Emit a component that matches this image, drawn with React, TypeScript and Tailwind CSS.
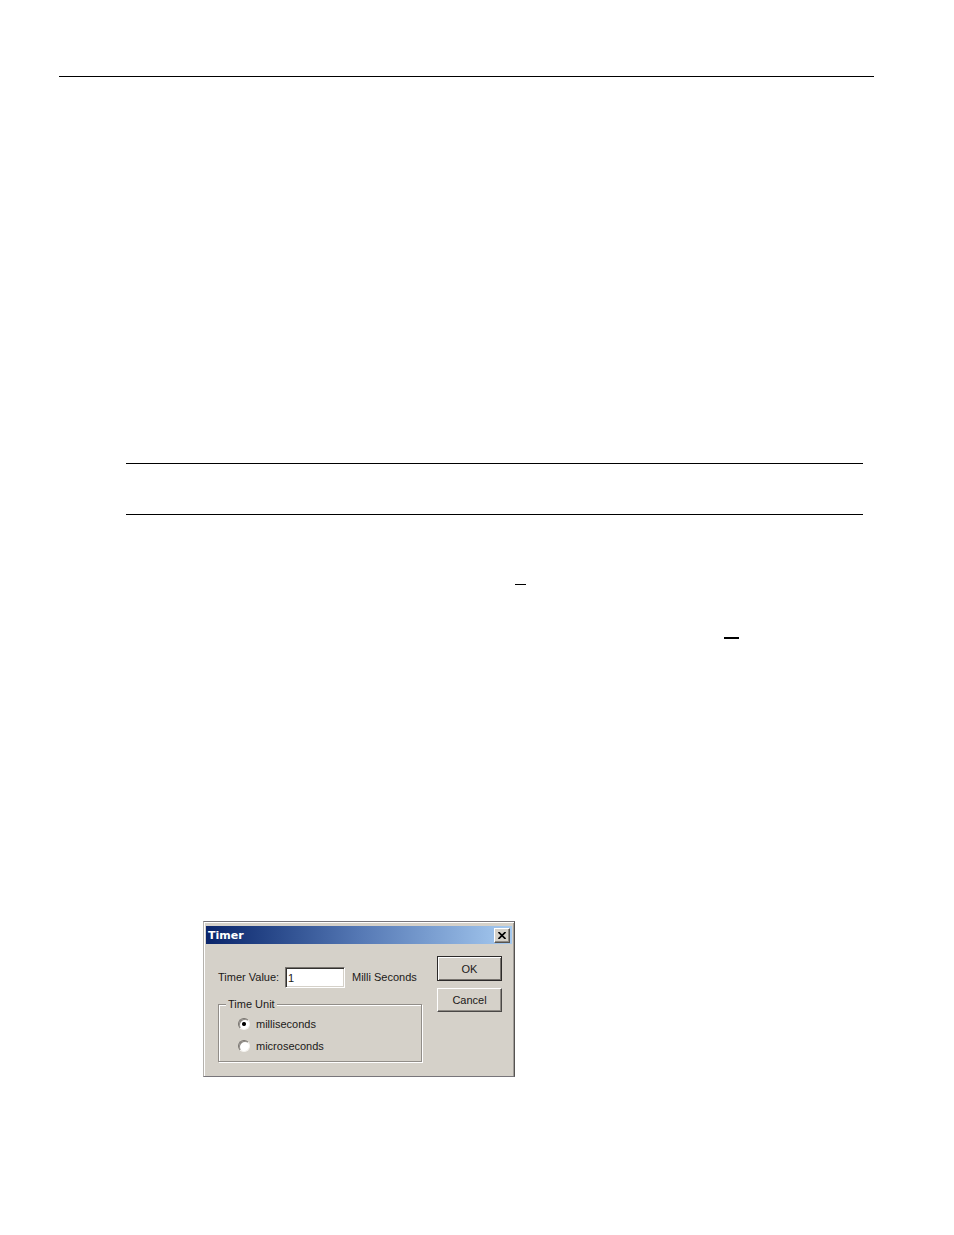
import { useState } from 'react'
import { clsx } from 'clsx'

type Unit = 'milliseconds' | 'microseconds'

const UNITS: { id: Unit; prefix: string }[] = [
  { id: 'milliseconds', prefix: 'Milli' },
  { id: 'microseconds', prefix: 'Micro' },
]

function DialogButton({ label, primary }: { label: string; primary?: boolean }) {
  return (
    <button
      type="button"
      className={clsx(
        'w-full border bg-[#d5d1c9] leading-3',
        primary
          ? 'h-[25px] border-[#2c2a29] shadow-[inset_1px_1px_0_#fff,inset_-1px_-1px_0_#77736e]'
          : 'h-6 border-t-white border-l-white border-r-[#4a4846] border-b-[#4a4846] shadow-[inset_-1px_-1px_0_#8e8a84]',
      )}>
      {label}
    </button>
  )
}

function UnitRadio({ unit, checked, onSelect }: {
  unit: Unit; checked: boolean; onSelect: (unit: Unit) => void
}) {
  return (
    <label className="flex h-[22px] items-center gap-1.5">
      <input
        type="radio"
        name="unit"
        checked={checked}
        onChange={() => onSelect(unit)}
        className={clsx(
          'size-3 appearance-none rounded-full border border-t-[#77736e] border-l-[#77736e] border-r-[#f4f2ee] border-b-[#f4f2ee]',
          'shadow-[inset_1px_1px_0_#8e8a84]',
          checked ? 'bg-[radial-gradient(circle,#000_0_1.5px,#fff_2.5px)]' : 'bg-white',
        )}
      />
      {unit}
    </label>
  )
}

function TimerDialog() {
  const [value, setValue] = useState('1')
  const [unit, setUnit] = useState<Unit>('milliseconds')
  const prefix = UNITS.find(u => u.id === unit)?.prefix

  return (
    <section
      aria-label="Timer"
      className="w-[312px] border border-t-[#77757a] border-l-[#b5b2ad] border-r-[#555351] border-b-[#77757a] bg-[#d5d1c9] px-0.5 pt-1 pb-3.5 font-['Liberation_Sans',Arial,sans-serif] text-[11px] leading-3 text-[#1b1918] shadow-[inset_1px_1px_0_#fff,inset_-1px_0_0_#a19d98]">
      {/* Title bar */}
      <header className="flex h-[18px] items-center justify-between bg-linear-to-r from-[#0a246a] via-[#5578b4] to-[#a6caf0] px-0.5">
        <h1 className="pt-0.5 font-['DejaVu_Sans',Verdana,sans-serif] font-bold text-white">Timer</h1>
        <button
          type="button"
          aria-label="Close"
          className="flex h-[15px] w-4 items-center justify-center border border-t-white border-l-white border-r-[#55534f] border-b-[#55534f] bg-[#d5d1c9] shadow-[inset_-1px_-1px_0_#8e8a84]">
          <svg viewBox="0 0 8 7" className="h-[7px] w-2" stroke="#000" strokeWidth="1.6">
            <path d="M.5 0 7.5 7M7.5 0 .5 7" />
          </svg>
        </button>
      </header>

      <form className="flex justify-between pt-3 pr-2.5 pl-3" onSubmit={e => e.preventDefault()}>
        <div className="w-[204px] pt-[11px]">
          <div className="flex items-center">
            <label htmlFor="timer-value" className="w-[67px] pb-0.5 whitespace-nowrap">Timer Value:</label>
            <input
              id="timer-value"
              value={value}
              onChange={e => setValue(e.target.value)}
              className="h-[21px] w-[60px] border border-t-[#77736e] border-l-[#77736e] border-r-white border-b-white bg-white px-0.5 shadow-[inset_1px_1px_0_#33312f,inset_-1px_-1px_0_#d5d1c9]"
            />
            <span className="pb-0.5 pl-[7px] whitespace-nowrap">{prefix} Seconds</span>
          </div>

          {/* The second edge of the etched frame is a white shadow */}
          <fieldset className="mt-2.5 border border-[#918d88] px-[19px] pb-1 shadow-[1px_1px_0_#fff,inset_1px_1px_0_#fff]">
            <legend className="-ml-3 bg-[#d5d1c9] px-0.5">Time Unit</legend>
            <div className="pt-[3px]">
              {UNITS.map(u => (
                <UnitRadio key={u.id} unit={u.id} checked={unit === u.id} onSelect={setUnit} />
              ))}
            </div>
          </fieldset>
        </div>

        <div className="flex w-[65px] flex-col gap-[7px]">
          <DialogButton label="OK" primary />
          <DialogButton label="Cancel" />
        </div>
      </form>
    </section>
  )
}

export default function App() {
  return (
    <main className="min-h-screen bg-white pt-[76px] pr-20 pl-[59px]">
      <hr className="border-black" />

      <div className="pt-[386px] pr-[11px] pl-[67px]">
        {/* Note box, ruled above and below */}
        <div className="h-[52px] border-y border-black" />

        <div className="pt-[69px] pl-[389px]">
          <hr className="w-[11px] border-black" />
        </div>
        <div className="flex justify-end pt-[52px] pr-[124px]">
          <hr className="w-[15px] border-t-2 border-black" />
        </div>

        <div className="pt-[282px] pl-[77px]">
          <TimerDialog />
        </div>
      </div>
    </main>
  )
}
